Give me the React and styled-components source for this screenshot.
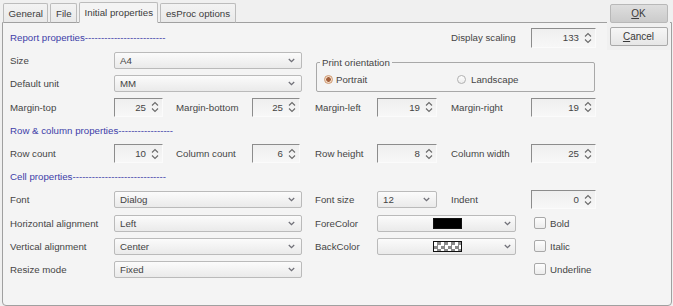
import styled, { createGlobalStyle } from 'styled-components'

const GlobalStyle = createGlobalStyle`
  body {
    margin: 0;
    background: #f0f0f0;
    font-family: "Liberation Sans", Arial, sans-serif;
    font-size: 9.7px;
    color: #454545;
  }
`

const Window = styled.div`
  position: relative;
  width: 673px;
  height: 306px;
  padding-top: 2px;
  box-sizing: border-box;
`

const TabStrip = styled.div`
  display: flex;
  align-items: flex-end;
  gap: 2px;
  height: 21px;
  padding-left: 3px;
  margin-bottom: -1px;
  position: relative;
  z-index: 1;
`

const Tab = styled.div`
  height: ${p => (p.$active ? 21 : 20)}px;
  box-sizing: border-box;
  padding: 0 4.5px;
  display: flex;
  align-items: center;
  border: 1px solid #bcbcbc;
  border-bottom: 1px solid ${p => (p.$active ? '#f4f4f4' : '#a0a0a0')};
  border-radius: 2px 2px 0 0;
  background: ${p => (p.$active ? '#f4f4f4' : 'linear-gradient(#f3f3f3, #e9e9e9)')};
  color: #3c3c3c;
`

const Panel = styled.div`
  margin-left: 2px;
  width: 670px;
  height: 284px;
  box-sizing: border-box;
  border: 1px solid #a0a0a0;
  border-radius: 0 0 4px 4px;
  background: #f4f4f4;
  padding: 3px 0 0 7px;
`

const Form = styled.div`
  display: grid;
  grid-template-columns: 104px 62px 76px 63px 62px 73px 81px 69px;
  grid-auto-rows: 23.2px;
  align-items: center;
`

const Heading = styled.div`
  grid-column: 1 / span 4;
  color: #3d3da8;
  white-space: nowrap;
`

const Label = styled.span`
  grid-column: ${p => p.$col};
  white-space: nowrap;
  padding-left: ${p => (p.$col === 7 ? 1 : 0)}px;
`

const SpinBox = styled.div`
  grid-column: ${p => p.$col};
  width: ${p => p.$w}px;
  height: ${p => p.$h || 19}px;
  box-sizing: border-box;
  border-top: 1px solid #8c8c8c;
  border-left: 1px solid #8c8c8c;
  border-right: 1px solid #fbfbfb;
  border-bottom: 1px solid #fbfbfb;
  background: linear-gradient(#efefef, #f7f7f7);
  display: flex;
  align-items: center;
  justify-content: flex-end;
  gap: 5px;
  padding-right: 3px;
  color: #444;
`

const ComboBox = styled.div`
  grid-column: ${p => p.$col} / span ${p => p.$span || 1};
  width: ${p => p.$w}px;
  height: 17px;
  box-sizing: border-box;
  border: 1px solid #bababa;
  border-radius: 2px;
  background: linear-gradient(#fbfbfb, #eaeaea);
  display: flex;
  align-items: center;
  padding: 0 ${p => p.$pr || 6}px 0 5px;
  color: #444;
`

const ComboText = styled.span`
  flex: 1;
`

const SwatchArea = styled.span`
  flex: 1;
  display: flex;
  justify-content: center;
  padding-left: 8px;
`

const Swatch = styled.span`
  width: 29px;
  height: 11px;
  box-sizing: border-box;
  border: 1px solid #111;
  background: ${p =>
    p.$checker
      ? 'repeating-conic-gradient(#8a8a8a 0 25%, #ffffff 0 50%) 0 0 / 7px 7px'
      : '#000'};
`

const Group = styled.fieldset`
  grid-column: 5 / span 4;
  grid-row: span 2;
  align-self: start;
  margin: 8px 0 0 1px;
  width: 279px;
  height: 35px;
  min-width: 0;
  box-sizing: border-box;
  border: 1px solid #a8a8a8;
  border-radius: 2px;
  padding: 0 0 0 7px;
  display: grid;
  grid-template-columns: 133px 1fr;
  align-items: center;
`

const Legend = styled.legend`
  margin-left: -4px;
  padding: 0 2px;
  line-height: 11px;
`

const Radio = styled.label`
  display: flex;
  align-items: center;
  gap: ${p => (p.$checked ? 3 : 5)}px;
`

const RadioDot = styled.span`
  width: 9px;
  height: 9px;
  box-sizing: border-box;
  border-radius: 50%;
  border: 1px solid ${p => (p.$checked ? '#cf9a72' : '#b0b0b0')};
  background: ${p =>
    p.$checked
      ? 'radial-gradient(circle, #a3603c 0 2px, #f3dcc8 2.6px)'
      : 'linear-gradient(#fdfdfd, #ededed)'};
`

const Check = styled.label`
  grid-column: 8;
  display: flex;
  align-items: center;
  gap: 4px;
  padding-left: 3px;
`

const CheckBox = styled.span`
  width: 12px;
  height: 12px;
  box-sizing: border-box;
  border: 1px solid #a8a8a8;
  border-radius: 2px;
  background: linear-gradient(#fdfdfd, #ececec);
`

const SideButtons = styled.div`
  position: absolute;
  top: 0;
  left: 607px;
  width: 63px;
  height: 50px;
  box-sizing: border-box;
  background: #f0f0f0;
  display: flex;
  flex-direction: column;
  align-items: center;
  gap: 4px;
  padding-top: 4px;
  z-index: 2;
`

const Button = styled.div`
  width: 58px;
  height: 19px;
  box-sizing: border-box;
  border: 1px solid ${p => (p.$default ? '#b8b8b8' : '#a9a9a9')};
  border-radius: 2px;
  background: ${p =>
    p.$default ? 'linear-gradient(#dedede, #cbcbcb)' : 'linear-gradient(#f6f6f6, #e6e6e6)'};
  display: flex;
  align-items: center;
  justify-content: center;
  color: #3a3a3a;
  font-size: 10px;

  u {
    text-decoration-thickness: 1px;
    text-underline-offset: 1px;
  }
`

const Arrows = () => (
  <svg width="8" height="14" viewBox="0 0 8 14">
    <path d="M1 5.5 L4 2.5 L7 5.5 M1 8.5 L4 11.5 L7 8.5" fill="none" stroke="#6a6a6a" strokeWidth="1.1" />
  </svg>
)

const Chevron = () => (
  <svg width="7" height="5" viewBox="0 0 7 5">
    <path d="M0.8 1 L3.5 3.7 L6.2 1" fill="none" stroke="#707078" strokeWidth="1.3" />
  </svg>
)

function Spinner({ col, w, h, value }) {
  return (
    <SpinBox $col={col} $w={w} $h={h}>
      <span>{value}</span>
      <Arrows />
    </SpinBox>
  )
}

function Combo({ col, span, w, value }) {
  return (
    <ComboBox $col={col} $span={span} $w={w}>
      <ComboText>{value}</ComboText>
      <Chevron />
    </ComboBox>
  )
}

function ColorCombo({ checker }) {
  return (
    <ComboBox $col={6} $span={2} $w={139} $pr={4}>
      <SwatchArea>
        <Swatch $checker={checker} />
      </SwatchArea>
      <Chevron />
    </ComboBox>
  )
}

const dashes = n => '-'.repeat(n)

export default function App() {
  return (
    <Window>
      <GlobalStyle />
      <TabStrip>
        <Tab>General</Tab>
        <Tab>File</Tab>
        <Tab $active>Initial properties</Tab>
        <Tab>esProc options</Tab>
      </TabStrip>
      <Panel>
        <Form>
          <Heading>Report properties{dashes(25)}</Heading>
          <Label $col={7}>Display scaling</Label>
          <Spinner col={8} w={65} h={20} value="133" />

          <Label $col={1}>Size</Label>
          <Combo col={2} span={3} w={188} value="A4" />
          <Group>
            <Legend>Print orientation</Legend>
            <Radio $checked>
              <RadioDot $checked />
              Portrait
            </Radio>
            <Radio>
              <RadioDot />
              Landscape
            </Radio>
          </Group>

          <Label $col={1}>Default unit</Label>
          <Combo col={2} span={3} w={188} value="MM" />

          <Label $col={1}>Margin-top</Label>
          <Spinner col={2} w={49} value="25" />
          <Label $col={3}>Margin-bottom</Label>
          <Spinner col={4} w={48} value="25" />
          <Label $col={5}>Margin-left</Label>
          <Spinner col={6} w={60} value="19" />
          <Label $col={7}>Margin-right</Label>
          <Spinner col={8} w={65} value="19" />

          <Heading>Row &amp; column properties{dashes(17)}</Heading>

          <Label $col={1}>Row count</Label>
          <Spinner col={2} w={49} value="10" />
          <Label $col={3}>Column count</Label>
          <Spinner col={4} w={48} value="6" />
          <Label $col={5}>Row height</Label>
          <Spinner col={6} w={60} value="8" />
          <Label $col={7}>Column width</Label>
          <Spinner col={8} w={65} value="25" />

          <Heading>Cell properties{dashes(29)}</Heading>

          <Label $col={1}>Font</Label>
          <Combo col={2} span={3} w={188} value="Dialog" />
          <Label $col={5}>Font size</Label>
          <Combo col={6} w={60} value="12" />
          <Label $col={7}>Indent</Label>
          <Spinner col={8} w={65} value="0" />

          <Label $col={1}>Horizontal alignment</Label>
          <Combo col={2} span={3} w={188} value="Left" />
          <Label $col={5}>ForeColor</Label>
          <ColorCombo />
          <Check>
            <CheckBox />
            Bold
          </Check>

          <Label $col={1}>Vertical alignment</Label>
          <Combo col={2} span={3} w={188} value="Center" />
          <Label $col={5}>BackColor</Label>
          <ColorCombo checker />
          <Check>
            <CheckBox />
            Italic
          </Check>

          <Label $col={1}>Resize mode</Label>
          <Combo col={2} span={3} w={188} value="Fixed" />
          <Check>
            <CheckBox />
            Underline
          </Check>
        </Form>
      </Panel>
      <SideButtons>
        <Button $default>
          <span><u>O</u>K</span>
        </Button>
        <Button>
          <span><u>C</u>ancel</span>
        </Button>
      </SideButtons>
    </Window>
  )
}
